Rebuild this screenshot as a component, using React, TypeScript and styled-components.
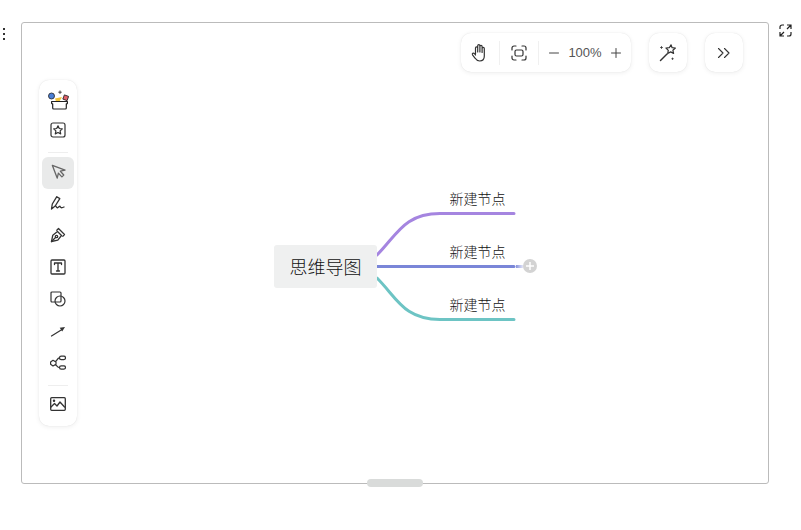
import { createGlobalStyle, styled } from 'styled-components';

const GlobalStyle = createGlobalStyle`
  html, body {
    margin: 0;
    padding: 0;
    background: #fff;
    font-family: "Noto Sans CJK SC", "Liberation Sans", sans-serif;
  }
`;

const Page = styled.div`
  width: 801px;
  height: 530px;
  display: grid;
  grid-template-columns: 21px 748px 32px;
  grid-template-rows: 462px;
  padding-top: 22px;
  box-sizing: border-box;
  overflow: hidden;
`;

const MoreDots = styled.div`
  display: flex;
  flex-direction: column;
  gap: 3px;
  padding: 6px 0 0 3px;

  i {
    width: 2px;
    height: 2px;
    background: #333;
  }
`;

const Frame = styled.div`
  position: relative;
  border: 1px solid #bbb;
  border-radius: 3px;
  box-sizing: border-box;
`;

const Expand = styled.div`
  display: flex;
  justify-content: flex-start;
  padding: 2px 0 0 10px;
`;

const TopBar = styled.div`
  position: absolute;
  top: 10px;
  right: 25px;
  display: flex;
  gap: 18px;
`;

const Card = styled.div`
  height: 39px;
  display: flex;
  align-items: center;
  background: #fff;
  border-radius: 10px;
  box-shadow: 0 1px 5px rgba(0, 0, 0, 0.07), 0 0 1px rgba(0, 0, 0, 0.12);
`;

const ZoomCard = styled(Card)`
  width: 170px;
  box-sizing: border-box;
  padding-left: 9px;
  color: #333;
`;

const SquareCard = styled(Card)`
  width: 38px;
  justify-content: center;
`;

const ZoomDivider = styled.span<{ $after: number }>`
  width: 1px;
  height: 24px;
  background: #f0f0f0;
  margin: 0 ${(p) => p.$after}px 0 11px;
`;

const Percent = styled.span`
  width: 52px;
  text-align: center;
  font-family: "Liberation Sans", sans-serif;
  font-size: 13px;
  color: #555;
`;

const SideBar = styled.div`
  position: absolute;
  left: 17px;
  top: 57px;
  width: 38px;
  height: 346px;
  box-sizing: border-box;
  padding: 4px 3px;
  background: #fff;
  border-radius: 10px;
  box-shadow: 0 1px 5px rgba(0, 0, 0, 0.07), 0 0 1px rgba(0, 0, 0, 0.12);
  display: flex;
  flex-direction: column;
`;

const Tool = styled.div<{ $active?: boolean }>`
  height: 32px;
  flex: none;
  box-sizing: border-box;
  padding-bottom: 4px;
  display: flex;
  align-items: center;
  justify-content: center;
  border-radius: 6px;
  background: ${(p) => (p.$active ? '#e9eaea' : 'transparent')};
`;

const StickerTool = styled(Tool)`
  padding-bottom: 0;
`;

const SideDivider = styled.div`
  height: 1px;
  flex: none;
  margin: 4px 6px;
  background: #eeeeee;
`;

const RootNode = styled.div`
  position: absolute;
  left: 252px;
  top: 222px;
  width: 103px;
  height: 43px;
  box-sizing: border-box;
  padding-bottom: 2px;
  display: flex;
  align-items: center;
  justify-content: center;
  background: #eff0f0;
  border-radius: 3px;
  font-size: 18px;
  font-weight: 300;
  color: #111;
`;

const Branches = styled.svg`
  position: absolute;
  left: 0;
  top: 0;
`;

const ChildLabel = styled.div<{ $top: number }>`
  position: absolute;
  left: 427px;
  top: ${(p) => p.$top}px;
  width: 57px;
  height: 20px;
  line-height: 20px;
  text-align: center;
  white-space: nowrap;
  font-size: 14px;
  font-weight: 300;
  color: #111;
`;

const Handle = styled.div`
  position: absolute;
  left: 345px;
  bottom: -4px;
  width: 56px;
  height: 8px;
  border-radius: 4px;
  background: #d9dbda;
`;

const line = { fill: 'none', stroke: '#333', strokeWidth: 1.2, strokeLinecap: 'round', strokeLinejoin: 'round' } as const;

function Sticker() {
  return (
    <svg width="22" height="20" viewBox="0 0 22 20">
      <path d="M8 8.500l7-1.500-2.500 4.500H9z" fill="#f3c53c" />
      <circle cx="4.500" cy="6" r="3" fill="#4a7fd6" stroke="#222" strokeWidth="0.8" />
      <rect x="16.500" y="5.500" width="4.500" height="4.500" transform="rotate(20 18.700 7.700)" fill="#e2606a" stroke="#222" strokeWidth="0.8" />
      <path d="M13 .5v3.400M11.300 2.200h3.400" stroke="#333" strokeWidth="0.9" />
      <path d="M4.600 11.500h15.800v1.800a.5.5 0 0 1-.5.5h-.6v4.200a1 1 0 0 1-1 1H6.700a1 1 0 0 1-1-1v-4.200h-.6a.5.5 0 0 1-.5-.5z" fill="#fff" stroke="#222" strokeWidth="1.200" strokeLinejoin="round" />
    </svg>
  );
}

function StarBox() {
  return (
    <svg width="16" height="16" viewBox="0 0 16 16" {...line}>
      <rect x="1" y="1" width="14" height="14" rx="2" />
      <path d="M8 3.800l1.300 2.700 3 .4-2.200 2 .6 3L8 10.500l-2.700 1.400.6-3-2.200-2 3-.4z" />
    </svg>
  );
}

function Arrow() {
  return (
    <svg width="15" height="15" viewBox="0 0 16 16" fill="none" stroke="#666" strokeWidth="1.400" strokeLinejoin="round">
      <path d="M1.500 1.500L15 6.500l-5 1.200 3.600 4-2 2-3.700-4L6.600 15z" />
    </svg>
  );
}

function Pencil() {
  return (
    <svg width="16" height="16" viewBox="0 0 16 16" {...line} strokeWidth="1.300">
      <path d="M1.500 14l.8-5 4.500-7.300 3 1.900-4.600 7.400z" />
      <path d="M5.700 11c.9 1.500 1.900 2.300 2.800 1.200.8-1 1.400-1.400 1.900-.2.4 1 1.700 1 3.600 0" />
    </svg>
  );
}

function PenNib() {
  return (
    <svg width="16" height="16" viewBox="0 0 16 16" {...line} strokeWidth="1.300">
      <path d="M1.500 14.500l1.300-6.300 4.700-3.700 4 4-3.700 4.700z" />
      <path d="M6.800 3.200l1.700-1.700 6 6-1.700 1.700" />
      <path d="M1.500 14.500l4-4" />
      <circle cx="6.500" cy="9.500" r="1.200" />
    </svg>
  );
}

function TextBox() {
  return (
    <svg width="16" height="16" viewBox="0 0 16 16" {...line} strokeWidth="1.300">
      <rect x="1" y="1" width="14" height="14" rx="1" />
      <path d="M4.500 5.500V4h7v1.500M8 4v8M6.500 12h3" />
    </svg>
  );
}

function Shapes() {
  return (
    <svg width="16" height="16" viewBox="0 0 16 16" {...line}>
      <rect x="1" y="1" width="10" height="10" rx="1" />
      <circle cx="10" cy="10" r="5" />
    </svg>
  );
}

function LineArrow() {
  return (
    <svg width="16" height="16" viewBox="0 0 16 16">
      <path d="M1.500 13L12 6.500" stroke="#333" strokeWidth="1.200" strokeLinecap="round" />
      <path d="M15 4l-5.300.7 2.500 3.900z" fill="#333" />
    </svg>
  );
}

function MindIcon() {
  return (
    <svg width="16" height="16" viewBox="0 0 16 16" {...line}>
      <path d="M3 5.300l3 1.700v2.200l-3 1.700-2.400-1.700V7z" />
      <rect x="9.500" y="1.200" width="6" height="3.400" rx="1.700" />
      <rect x="9.500" y="10.800" width="6" height="3.400" rx="1.700" />
      <path d="M5.400 6.400c1.700-.3 1.700-3.500 4.100-3.500M5.400 9.800c1.700.3 1.700 2.700 4.100 2.700" />
    </svg>
  );
}

function ImageIcon() {
  return (
    <svg width="16" height="14" viewBox="0 0 16 14" {...line} strokeWidth="1.300">
      <rect x=".7" y=".7" width="14.600" height="12.600" rx="1" />
      <path d="M1 10l3.500-3.500 2.500 2.500 3-4 4.500 5" />
      <circle cx="4" cy="3.800" r=".6" />
    </svg>
  );
}

function Hand() {
  return (
    <svg width="18" height="20" viewBox="-1 0 18 20" {...line}>
      <path d="M4.500 11V5a1.100 1.100 0 0 1 2.200 0v4M6.700 9V2.800a1.100 1.100 0 0 1 2.200 0V9M8.900 9V3.500a1.100 1.100 0 0 1 2.200 0V9.500M11.100 9.500V5.500a1.100 1.100 0 0 1 2.200 0V13c0 3.300-1.800 5-4.600 5-2.200 0-3.400-.9-4.500-2.700L1.500 11.800c-.7-1.200.9-2.300 1.800-1.300L4.500 12" />
    </svg>
  );
}

function FocusFrame() {
  return (
    <svg width="16" height="16" viewBox="0 0 16 16" {...line}>
      <path d="M1 5V3a2 2 0 0 1 2-2h2M11 1h2a2 2 0 0 1 2 2v2M15 11v2a2 2 0 0 1-2 2h-2M5 15H3a2 2 0 0 1-2-2v-2" />
      <rect x="4" y="5" width="8" height="6" rx="1.500" />
    </svg>
  );
}

function Minus() {
  return (
    <svg width="10" height="10" viewBox="0 0 10 10" {...line} stroke="#444" strokeWidth="1">
      <path d="M.5 5h9" />
    </svg>
  );
}

function Plus() {
  return (
    <svg width="10" height="10" viewBox="0 0 10 10" {...line} stroke="#444" strokeWidth="1">
      <path d="M.5 5h9M5 .5v9" />
    </svg>
  );
}

function Wand() {
  return (
    <svg width="18" height="18" viewBox="0 0 18 18" {...line}>
      <path d="M12 .8l1.100 2.900 3.300.3-2.500 2.300.7 3.200-2.900-1.600-3 1.600.6-3.200-2.300-2.300 3.300-.3z" />
      <path d="M8 10L1.500 16.500" strokeWidth="1.500" />
      <path d="M2.500 2.500V4.500M1.500 3.500h2M13.500 14v1.500M12.800 14.700h1.500" strokeWidth="0.8" />
    </svg>
  );
}

function Chevrons() {
  return (
    <svg width="14" height="12" viewBox="0 0 14 12" {...line} strokeWidth="1.100">
      <path d="M1.500 1.500l4.500 4.500-4.500 4.500M7.500 1.500l4.500 4.500-4.500 4.500" />
    </svg>
  );
}

function ExpandIcon() {
  return (
    <svg width="13" height="13" viewBox="0 0 13 13" fill="none" stroke="#222" strokeWidth="1.200">
      <path d="M5 1H3a2 2 0 0 0-2 2v2M8 12h2a2 2 0 0 0 2-2V8M8 1h4v4M12 1L8 5M1 8v4h4M1 12l4-4" />
    </svg>
  );
}

function MindLines() {
  return (
    <Branches width="746" height="460" fill="none" strokeWidth="3" strokeLinecap="round">
      <defs>
        <linearGradient id="fade" gradientUnits="userSpaceOnUse" x1="493" y1="0" x2="502" y2="0">
          <stop offset="0" stopColor="#7a86d8" />
          <stop offset="1" stopColor="#7a86d8" stopOpacity="0.1" />
        </linearGradient>
      </defs>
      <path d="M355 232C375 212 382 190.500 418 190.500H492" stroke="#a585e0" />
      <path d="M355 243.500H492" stroke="#7a86d8" />
      <path d="M355 255C375 275 382 296.500 418 296.500H492" stroke="#6dc4c4" />
      <path d="M494 243.500h8" stroke="url(#fade)" strokeLinecap="butt" />
      <circle cx="508" cy="243" r="7" fill="#d3d3d3" />
      <path d="M504 243h8M508 239v8" stroke="#fff" strokeWidth="1.500" strokeLinecap="butt" />
    </Branches>
  );
}

export default function App() {
  return (
    <Page>
      <GlobalStyle />
      <MoreDots>
        <i />
        <i />
        <i />
      </MoreDots>
      <Frame>
        <MindLines />
        <RootNode>思维导图</RootNode>
        <ChildLabel $top={165}>新建节点</ChildLabel>
        <ChildLabel $top={218}>新建节点</ChildLabel>
        <ChildLabel $top={271}>新建节点</ChildLabel>

        <TopBar>
          <ZoomCard>
            <Hand />
            <ZoomDivider $after={11} />
            <FocusFrame />
            <ZoomDivider $after={10} />
            <Minus />
            <Percent>100%</Percent>
            <Plus />
          </ZoomCard>
          <SquareCard>
            <Wand />
          </SquareCard>
          <SquareCard>
            <Chevrons />
          </SquareCard>
        </TopBar>

        <SideBar>
          <StickerTool>
            <Sticker />
          </StickerTool>
          <Tool>
            <StarBox />
          </Tool>
          <SideDivider />
          <Tool $active>
            <Arrow />
          </Tool>
          <Tool>
            <Pencil />
          </Tool>
          <Tool>
            <PenNib />
          </Tool>
          <Tool>
            <TextBox />
          </Tool>
          <Tool>
            <Shapes />
          </Tool>
          <Tool>
            <LineArrow />
          </Tool>
          <Tool>
            <MindIcon />
          </Tool>
          <SideDivider />
          <Tool>
            <ImageIcon />
          </Tool>
        </SideBar>

        <Handle />
      </Frame>
      <Expand>
        <ExpandIcon />
      </Expand>
    </Page>
  );
}
